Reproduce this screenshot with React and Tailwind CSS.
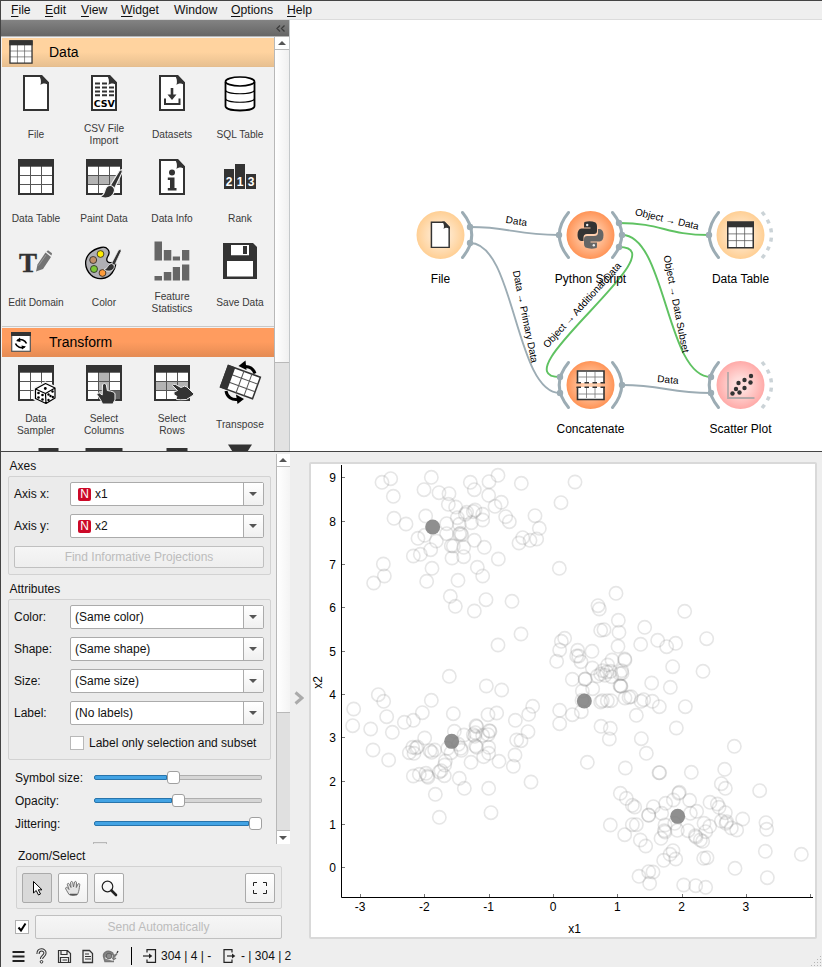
import React from "react";

const INK = "#333333";

/* ---------- toolbox icons, all on a 40x40 grid ---------- */

function Icon({ children }) {
  return (
    <svg viewBox="0 0 40 40" className="w-10 h-10 block overflow-visible">
      {children}
    </svg>
  );
}

function Sheet() {
  return (
    <>
      <path d="M8 3H25L32 10V37H8Z" fill="#fff" stroke={INK} strokeWidth="2" />
      <path d="M22.500 2H26L33 9.500V12C29 10 26.500 10 24.500 12C25.500 8 25 5 22.500 2Z" fill={INK} />
    </>
  );
}

function Table({ row, col, dark }) {
  return (
    <>
      <rect x="3" y="3" width="34" height="34" fill="#fff" />
      {row && <rect x="4" y="18.500" width="32" height="9" fill="#b3b3b3" />}
      {col && <rect x="14.500" y="9" width="11" height="27" fill="#b3b3b3" />}
      {dark && <rect x="26" y="27.500" width="11" height="9.500" fill="#666" />}
      <path d="M14.500 9V37M25.500 9V37M3 18.500H37M3 27.500H37" stroke="#555" strokeWidth="1" />
      <path d="M3 3H37V37H3Z" fill="none" stroke={INK} strokeWidth="2" />
      <rect x="2" y="2" width="36" height="7.700" fill={INK} />
    </>
  );
}

function Brush() {
  return (
    <g stroke="#f1f1f1" strokeWidth="1.200" fill={INK}>
      <path d="M35.500 13.500L38 12.500L38.300 15L30.500 31.500L26 29Z" />
      <path d="M26 28.500C28.500 28.500 31 31 30.500 34C29.500 38 26 41 21.500 41C19 41 17 40.500 16 39C20 38.500 20 36 21.500 32C22.500 29.500 24 28.500 26 28.500Z" />
    </g>
  );
}

const icons = {
  file: <Sheet />,
  csv: (
    <>
      <Sheet />
      <path d="M11 10.500H23M11 14.500H30M11 18.500H30M11 22.300H30" stroke={INK} strokeWidth="2" strokeDasharray="5 2" />
      <text x="20.300" y="34" textAnchor="middle" fontSize="9.500" fontWeight="bold" fontFamily="DejaVu Sans, sans-serif" fill="#000">CSV</text>
    </>
  ),
  datasets: (
    <>
      <Sheet />
      <path d="M18.700 15H21.300V21.500H24.500L20 27L15.500 21.500H18.700Z" fill={INK} />
      <path d="M13 25.500V31H27.500V25.500" fill="none" stroke={INK} strokeWidth="2" />
    </>
  ),
  sql: (
    <>
      <path d="M5.500 9V33C5.500 39 34.500 39 34.500 33V9" fill="#fff" stroke="#000" strokeWidth="1.800" />
      <ellipse cx="20" cy="8.500" rx="14.500" ry="4.500" fill="#fff" stroke="#000" strokeWidth="1.700" />
      <path d="M5.500 17C6 22 34 22 34.500 17M5.500 25.500C6 30.500 34 30.500 34.500 25.500" fill="none" stroke="#000" strokeWidth="1.200" />
    </>
  ),
  table: <Table />,
  paint: (
    <>
      <Table row />
      <Brush />
    </>
  ),
  info: (
    <>
      <Sheet />
      <circle cx="20" cy="15.500" r="3" fill={INK} />
      <path d="M15.800 20.500H22.500V31H24.500V33.500H15.800V31H18V23H15.800Z" fill={INK} />
    </>
  ),
  rank: (
    <>
      <path d="M4 12H14V32H4ZM15 7H25V32H15ZM26 17H36V32H26Z" fill={INK} />
      <g fill="#fff" fontSize="12" fontWeight="bold" fontFamily="Liberation Sans, sans-serif" textAnchor="middle">
        <text x="9" y="29">2</text>
        <text x="20" y="29">1</text>
        <text x="31" y="29">3</text>
      </g>
    </>
  ),
  domain: (
    <>
      <text x="12" y="31" textAnchor="middle" fontSize="27" fontWeight="bold" fontFamily="Liberation Serif, serif" fill={INK} stroke={INK} strokeWidth=".4">T</text>
      <g fill="#737373">
        <path d="M20 30.500L21.500 23.500L29.500 11.500L35 16L27 28Z" />
        <path d="M30.500 10.700L32 9.300L36 12.300L35.500 14.500Z" />
      </g>
      <path d="M22.500 24.500L30 14" stroke="#999" strokeWidth="1" />
    </>
  ),
  color: (
    <>
      <path d="M17 6.500C23 5 27 10 24 15C21 20 24 23 29 21C33 20 32 27 28 32C23 38.500 13 39.500 7 34C0 27 0 18 6 12C9 9 13 7.500 17 6.500Z" fill="#b0b0b4" stroke="#000" strokeWidth="1.300" />
      <g stroke="#222" strokeWidth="0.800">
        <circle cx="16.500" cy="13" r="3.400" fill="#ffec00" />
        <circle cx="9.200" cy="19" r="3.500" fill="#c0906a" />
        <circle cx="10" cy="28" r="3.500" fill="#7ec838" />
        <circle cx="18.500" cy="32" r="3.400" fill="#ff9c3a" />
      </g>
      <g stroke="#f1f1f1" strokeWidth="0.800" fill={INK}>
        <path d="M34.500 9L37 8L37 10.500L30.500 24.500L27.500 22.500Z" />
        <path d="M27.300 22.500C29.500 23 31 25 29.800 27.500C28 30.500 23 31 20 28.500C23.500 28.500 23.500 23 27.300 22.500Z" />
      </g>
    </>
  ),
  stats: (
    <path
      d="M2.500 .5H10V19.500H2.500ZM11.800 9H19.300V19.500H11.800ZM20.800 15.500H28V19.500H20.800ZM30 9H37.300V19.500H30ZM2.500 35H10V39.500H2.500ZM11.800 31H19.300V39.500H11.800ZM20.800 26H28V39.500H20.800ZM30 23.500H37.300V39.500H30Z"
      fill="#666"
    />
  ),
  save: (
    <>
      <path d="M3 2H33L37 6V38H3Z" fill={INK} />
      <path d="M11 4H29V14.200H11ZM7 20H33V35.500H7Z" fill="#fff" />
      <rect x="23" y="5" width="4" height="8" fill={INK} />
    </>
  ),
  sampler: (
    <>
      <Table />
      <path d="M29.500 20L39.500 24.500V35.500L30 41.500L19 36V25.500Z" fill="#fff" stroke="#f1f1f1" strokeWidth="3" />
      <path d="M29.500 20.500L39 25V35L30 40.500L19.500 35.500V26Z M19.500 26L29.500 30.500L39 25M29.500 30.500L30 40.500" fill="#fff" stroke="#000" strokeWidth="1.200" strokeLinejoin="round" />
      <g fill="#000">
        <circle cx="29.300" cy="25.500" r="1.400" />
        <circle cx="22.500" cy="30" r="1.300" /><circle cx="26.500" cy="32" r="1.300" />
        <circle cx="22.500" cy="34.500" r="1.300" /><circle cx="26.500" cy="36.500" r="1.300" />
        <circle cx="32.500" cy="31.500" r="1.200" /><circle cx="36.500" cy="28.500" r="1.200" />
        <circle cx="34.500" cy="33" r="1.200" />
        <circle cx="32.500" cy="37" r="1.200" /><circle cx="36.800" cy="34" r="1.200" />
      </g>
    </>
  ),
  columns: (
    <>
      <Table col dark />
      <path d="M18.500 21.500Q20.500 19.500 22.300 21.500L23.300 27.500Q31 28.500 31 31V37Q30 38 29 41H18.500Q17.500 38 16 36L13 31.500Q13.500 29.500 15.500 30L18.200 32Z" fill={INK} stroke="#f1f1f1" strokeWidth="1" />
    </>
  ),
  rows: (
    <>
      <Table row />
      <path d="M20.500 22.500Q21 20.500 23.500 21.500L29 24.500Q33 22 35 24L41.500 30.500V32L34.500 36.500Q28 37 24.500 36.500Q23.500 35 25 33.500L22 31.500V29L25.500 27.500Z" fill={INK} stroke="#f1f1f1" strokeWidth="1" />
    </>
  ),
  transpose: (
    <>
      <g transform="rotate(20 20 19)">
        <rect x="3.500" y="7.500" width="34" height="23" fill="#fff" stroke={INK} strokeWidth="1.500" />
        <path d="M20 7V31M28.500 7V31M10 15H37.500M10 23H37.500" stroke="#555" />
        <rect x="2.700" y="7" width="8" height="24" fill={INK} />
      </g>
      <path d="M35 10.500C33 5 29 3 24 3.500" fill="none" stroke="#000" strokeWidth="3" />
      <path d="M18.500 3L25.500 -2.500L26.500 7Z" />
      <path d="M6 28C7 34 12 37 17 36.500" fill="none" stroke="#000" strokeWidth="3" />
      <path d="M24 36L16 31.500L17.500 41Z" />
    </>
  ),
  merge: (
    <>
      <path d="M24 8V2.500H41V8" fill="#fff" stroke={INK} strokeWidth="3" />
      <path d="M32.500 4V8" stroke="#555" />
    </>
  ),
  concat: (
    <>
      <path d="M3 8V2.500H37V8" fill="#fff" stroke={INK} strokeWidth="3" />
      <path d="M14.500 4V8M25.500 4V8" stroke="#555" />
    </>
  ),
  aggregate: (
    <>
      <path d="M16 8V2.500H34V8" fill="#fff" stroke={INK} strokeWidth="3" />
      <path d="M25 4V8" stroke="#555" />
    </>
  ),
  funnel: <path d="M8 -2.500H32L24 10H16Z" fill={INK} />,
};

const dataWidgets = [
  ["file", "File"], ["csv", "CSV File\nImport"], ["datasets", "Datasets"], ["sql", "SQL Table"],
  ["table", "Data Table"], ["paint", "Paint Data"], ["info", "Data Info"], ["rank", "Rank"],
  ["domain", "Edit Domain"], ["color", "Color"], ["stats", "Feature\nStatistics"], ["save", "Save Data"],
];

const transformWidgets = [
  ["sampler", "Data\nSampler"], ["columns", "Select\nColumns"], ["rows", "Select\nRows"], ["transpose", "Transpose"],
  ["merge", ""], ["concat", ""], ["aggregate", ""], ["funnel", ""],
];

function WidgetGrid({ items }) {
  return (
    <div className="grid grid-cols-[repeat(4,68px)] auto-rows-[84px]">
      {items.map(([icon, label]) => (
        <div key={icon} className="flex flex-col items-center pt-1.5">
          <Icon>{icons[icon]}</Icon>
          <div className="mt-2 flex h-7 items-center whitespace-pre text-center text-[10.200px] leading-3 text-[#3a3a3a]">
            {label}
          </div>
        </div>
      ))}
    </div>
  );
}

function Category({ title, color, children }) {
  return (
    <div className={"flex h-[29px] w-[272px] shrink-0 items-center border-b border-black/10 " + color}>
      <div className="flex w-[47px] justify-center pr-[9px]">{children}</div>
      <div className="text-[14px] text-black">{title}</div>
    </div>
  );
}

/* ---------- menu and toolbox ---------- */

const menus = [
  ["F", "ile", "w-[34px]"], ["E", "dit", "w-9"], ["V", "iew", "w-10"], ["W", "idget", "w-[53px]"],
  ["", "Window", "w-[57px]"], ["O", "ptions", "w-14"], ["H", "elp", "w-10"],
];

function MenuBar() {
  return (
    <div className="flex h-5 w-full items-center border-b border-[#dcdcdc] border-t border-t-[#444] bg-[#efefef] pl-2.5 text-[12.200px]">
      {menus.map(([key, rest, w]) => (
        <div key={rest} className={w}>
          <span className="underline underline-offset-2">{key}</span>
          {rest}
        </div>
      ))}
    </div>
  );
}

function Arrow({ down }) {
  return (
    <svg viewBox="0 0 8 4" className="h-1 w-2">
      <path d={down ? "M0 0H8L4 4Z" : "M0 4H8L4 0Z"} fill="#555" />
    </svg>
  );
}

function Toolbox() {
  return (
    <div className="flex w-[289px] shrink-0 flex-col border-r border-[#c4c8ca]">
      <div className="flex h-4 items-center justify-end bg-linear-to-b from-[#838383] to-[#666] pr-1">
        <svg viewBox="0 0 9 7" className="h-[7px] w-[9px]">
          <path d="M4 .5L1 3.500L4 6.500M8.500 .5L5.500 3.500L8.500 6.500" fill="none" stroke="#3c3c3c" strokeWidth="1.300" />
        </svg>
      </div>
      <div className="flex min-h-0 flex-1 border-t border-[#b5b5b5]">
        <div className="flex w-[273px] flex-col overflow-hidden bg-[#f1f1f1] pl-px pt-px">
          <Category title="Data" color="bg-linear-to-b from-[#ffd39f] from-50% to-[#e8c090]">
            <svg viewBox="1.500 1.500 37 37" className="size-6">
              <Table />
            </svg>
          </Category>
          <div className="h-[260px] shrink-0 border-b border-[#c8c8c8]">
            <WidgetGrid items={dataWidgets} />
          </div>
          <div className="flex pt-px">
            <Category title="Transform" color="bg-linear-to-b from-[#ff9c5f] from-50% to-[#e68c54]">
              <svg viewBox="0 0 20 20" className="size-5">
                <rect x=".7" y=".7" width="18.600" height="18.600" fill="#fff" stroke="#555" strokeWidth="1.200" />
                <rect width="20" height="4" fill={INK} />
                <path d="M6.500 8.300C10 6.500 14 8 15.500 11.500M13.500 15C10 16.500 6 15.500 4.500 11.500" fill="none" stroke="#000" strokeWidth="1.600" />
                <path d="M5 9L9 5.500L9.500 10ZM15 14.500L10.500 13.500L11 17.500Z" />
              </svg>
            </Category>
          </div>
          <WidgetGrid items={transformWidgets} />
        </div>
        <div className="flex w-[15px] flex-col border-l border-[#b8b8b8] bg-[#e2e2e2]">
          <div className="flex h-[13px] items-center justify-center border-b border-[#b8b8b8] bg-white pr-px"><Arrow /></div>
          <div className="h-[313px] border-b border-[#b8b8b8] bg-linear-to-r from-white to-[#f0f0f0]" />
        </div>
      </div>
    </div>
  );
}

/* ---------- workflow canvas ---------- */

const GRAY = "#9cacb4";
const GREEN = "#5fc262";

function Node({ x, y, fill, label, left, right, idle, children }) {
  return (
    <g transform={`translate(${x} ${y})`}>
      <circle r="24" fill={`url(#${fill})`} />
      {left && <path d="M-22 -22.500Q-40.500 0 -22 22.500" fill="none" stroke={GRAY} strokeWidth="3" strokeLinecap="round" />}
      {right && <path d="M22 -22.500Q40.500 0 22 22.500" fill="none" stroke={GRAY} strokeWidth="3" strokeLinecap="round" />}
      {idle && <path d="M21.500 -23Q40.500 0 21.500 23" fill="none" stroke="#cbd3d7" strokeWidth="3.500" pathLength="50" strokeDasharray="4 5.200" />}
      {children}
      <text y="48" textAnchor="middle" fontSize="12" fill="#000">{label}</text>
    </g>
  );
}

const links = [
  ["M470 227C512 227 514 235 559 235", GRAY],
  ["M470 243C515 243 515 393 560 393", GRAY],
  ["M622 385C664 385 668 393 711 393", GRAY],
  ["M619 223C662 223 666 235 709 235", GREEN],
  ["M622 235C666 235 666 377 711 377", GREEN],
  ["M619 247C682 247 497 377 560 377", GREEN],
];

const ports = [
  [470, 227], [470, 243], [559, 235], [619, 223], [622, 235], [619, 247], [709, 235],
  [560, 377], [560, 393], [622, 385], [711, 377], [711, 393],
];

const linkLabels = [
  [516.5, 221, 9, "Data", 21.5],
  [525.5, 316.5, 78.5, "Data → Primary Data", 94],
  [582, 305, -48, "Object → Additional Data", 111],
  [667, 219, 13, "Object → Data", 65],
  [676.5, 304, 79, "Object → Data Subset", 99],
  [668, 379.5, 5, "Data", 21.5],
];

function Canvas() {
  return (
    <svg viewBox="290 20 532 431" className="block h-[431px] w-[532px] bg-white" fontFamily="Liberation Sans, sans-serif">
      <defs>
        <radialGradient id="cream"><stop offset=".3" stopColor="#ffe9cf" /><stop offset="1" stopColor="#ffcf94" /></radialGradient>
        <radialGradient id="orange"><stop offset=".25" stopColor="#ffd0b0" /><stop offset="1" stopColor="#ff9457" /></radialGradient>
        <radialGradient id="pink"><stop offset=".3" stopColor="#ffdcda" /><stop offset="1" stopColor="#ffaaa8" /></radialGradient>
      </defs>
      {links.map(([d, c]) => <path key={d} d={d} fill="none" stroke={c} strokeWidth="1.900" />)}
      <Node x={440.5} y={235} fill="cream" label="File" right>
        <g transform="translate(-15 -15) scale(.74)"><Sheet /></g>
      </Node>
      <Node x={590.5} y={235} fill="orange" label="Python Script" left right>
        <path d="M-6 -13Q0 -14.500 5 -12.500Q6.500 -11.500 6.500 -9V-4Q6.500 -1 3.500 -1H-3.500Q-7 -1 -7 2.500V6H-9.500Q-13 5 -13 0Q-13 -6 -9 -6.500H0V-7.500H-6.500V-10.500Q-6.500 -12.500 -6 -13Z" fill={INK} />
        <path d="M6 13Q0 14.500 -5 12.500Q-6.500 11.500 -6.500 9V4Q-6.500 1 -3.500 1H3.500Q7.500 1 7.500 -2.500V-6H9.500Q13 -5 13 0Q13 6 9 6.500H0V7.500H6.500V10.500Q6.500 12.500 6 13Z" fill="#666" />
        <circle cx="-3.300" cy="-10" r="1.200" fill="#eee" />
        <circle cx="3.300" cy="10.200" r="1.200" fill="#eee" />
      </Node>
      <Node x={740.5} y={235} fill="cream" label="Data Table" left idle>
        <g transform="translate(-15 -15) scale(.75)"><Table /></g>
      </Node>
      <Node x={590.5} y={385} fill="orange" label="Concatenate" left right>
        <path d="M-13 -14.500H13.500V-2H-13ZM-13 2H13.500V14.500H-13Z" fill="#fff" />
        <path d="M-4 -13V-3M4.500 -13V-3M-12 -8H13M-4 3V13M4.500 3V13M-12 9H13" stroke="#777" strokeWidth=".8" />
        <path d="M-13 -2V-14H13.500V-2M-13 2V14.500H13.500V2" fill="none" stroke={INK} strokeWidth="1.600" />
        <path d="M-14 -2.200H14.500M-14 2.200H14.500" stroke={INK} strokeWidth="1.600" strokeDasharray="4.500 3.500" />
      </Node>
      <Node x={740.5} y={385} fill="pink" label="Scatter Plot" left idle>
        <path d="M-12.500 -13V13H14" fill="none" stroke="#b5a8a8" strokeWidth="1.800" />
        {[[-8, 8.5], [-4.5, 4], [-1, 7.5], [-2, -2], [4, 3], [4, -5], [10, -2.5], [10.5, -9]].map(([a, b]) => (
          <circle key={a + "," + b} cx={a} cy={b} r="2.200" fill={INK} />
        ))}
      </Node>
      {ports.map(([x, y]) => <circle key={x + "," + y} cx={x} cy={y} r="3.200" fill={GRAY} />)}
      {linkLabels.map(([x, y, a, t, len]) => (
        <text key={t + x} transform={`translate(${x} ${y}) rotate(${a})`} y="3.500" textAnchor="middle" fontSize="10" textLength={len} fill="#000">
          {t}
        </text>
      ))}
    </svg>
  );
}

/* ---------- scatter plot ---------- */

// Each cluster lists x,y pairs in thirds of a pixel from its own origin.
const clusters = [
  {
    at: [340, 460],
    picked: [278, 201],
    pts: "126,67 152,56 274,52 160,109 252,89 297,98 327,101 391,67 403,89 447,65 474,46 446,106 544,70 325,133 347,141 465,139 484,127 162,175 198,192 257,168 320,191 352,173 358,193 380,157 376,163 400,155 405,150 428,163 428,180 394,188 497,170 508,185 585,167 598,205 234,235 254,226 289,243 320,221 358,222 362,220 365,224 548,233 537,249 570,241 590,237 403,241 433,262 272,269 334,257 340,258 371,262 336,294 371,290 475,297 220,288 241,283 130,312 133,348 101,369 276,325 260,364 354,361 412,322 428,348 331,409 346,439 403,453 438,419 516,424 543,522 663,128 658,325 705,66",
  },
  {
    at: [340, 640],
    picked: [335, 304],
    pts: "474,15 328,109 439,138 485,150 115,164 131,184 274,181 41,207 38,257 140,230 92,267 157,277 193,247 220,241 247,218 340,221 444,224 470,219 526,241 566,223 578,199 564,275 530,300 543,302 343,274 372,285 408,257 410,260 406,278 400,284 404,289 448,272 450,274 444,284 428,286 99,330 146,360 254,294 232,321 228,324 218,322 208,338 222,340 270,332 275,337 284,330 323,325 362,325 364,331 355,313 333,338 410,322 407,318 446,322 446,340 431,350 393,367 477,364 520,379 525,345 316,363 314,375 298,396 303,392 313,407 220,408 238,403 258,400 262,408 264,412 358,415 373,445 573,426 446,445 286,463 298,532 453,518",
  },
  {
    at: [540, 570],
    picked: [133, 393],
    pts: "228,70 174,107 178,117 434,124 235,151 237,187 182,181 192,179 314,172 302,223 353,211 380,230 407,220 500,206 74,205 64,214 59,240 50,274 234,229 156,244 113,241 110,258 116,258 123,275 398,290 489,304 157,294 216,270 254,267 255,270 203,285 188,302 200,306 212,304 182,312 195,316 172,318 215,320 245,302 246,310 240,311 97,328 136,327 135,328 335,339 391,352 127,363 158,356 240,347 243,349 242,348 126,391 182,396 187,392 202,392 213,392 255,384 267,382 273,380 303,394 311,389 337,394 358,410 436,410 59,421 59,461 97,434 124,425",
  },
  {
    at: [590, 710],
    picked: [263, 319],
    pts: "139,16 33,49 61,55 58,87 154,86 259,54 169,130 433,109 404,178 304,187 207,188 209,188 -8,157 106,174 91,250 109,265 127,286 134,291 394,221 406,235 509,242 268,247 266,250 250,270 227,280 190,290 299,271 360,277 382,282 387,292 406,308 176,316 176,315 215,310 301,310 320,304 458,327 61,345 127,344 139,344 104,374 225,345 223,362 225,366 213,385 262,361 254,340 342,340 359,349 347,365 294,362 316,377 318,381 331,390 338,394 394,333 408,340 410,335 424,354 440,360 528,338 530,358 526,424 634,433 151,390 167,408 249,422 240,433 221,451 257,447 341,445 351,443 435,475 532,503 147,499 176,485 189,486 179,520 281,525 317,527 347,532",
  },
];

const xTicks = [-3, -2, -1, 0, 1, 2, 3, 4];
const yTicks = [0, 1, 2, 3, 4, 5, 6, 7, 8, 9];

function Plot() {
  return (
    <svg viewBox="311 464 504 473" className="block h-[473px] w-[504px]" fontFamily="Liberation Sans, sans-serif" fontSize="12" fill="#000">
      {clusters.map(({ at, pts, picked }) => (
        <g key={at.join()} transform={`translate(${at[0]} ${at[1]}) scale(.33333)`}>
          <g fill="none" stroke="#808080" strokeOpacity=".2" strokeWidth="4.800">
            {pts.split(" ").map((p, i) => {
              const [cx, cy] = p.split(",");
              return <circle key={i} cx={cx} cy={cy} r="20" />;
            })}
          </g>
          <circle cx={picked[0]} cy={picked[1]} r="22.500" fill="#808080" fillOpacity=".88" />
        </g>
      ))}
      <path d="M341.500 465V897.500H813" fill="none" stroke="#000" strokeWidth="1" />
      {yTicks.map((v) => {
        const y = Math.round(867.3 - v * 43.35);
        return (
          <g key={v}>
            <path d={`M342 ${y + 0.5}h3`} stroke="#777" />
            <text x="336" y={y + 4.5} textAnchor="end">{v}</text>
          </g>
        );
      })}
      {xTicks.map((v) => {
        const x = 553 + v * 64.3;
        return (
          <g key={v}>
            <path d={`M${Math.round(x) + 0.5} 894v3`} stroke="#777" />
            {v < 4 && <text x={x} y="911" textAnchor="middle">{v}</text>}
          </g>
        );
      })}
      <text x="574.500" y="933" textAnchor="middle">x1</text>
      <text transform="translate(321.500 682.500) rotate(-90)" textAnchor="middle">x2</text>
    </svg>
  );
}

/* ---------- control panel ---------- */

function Combo({ label, value, numeric }) {
  return (
    <div className="flex h-6 items-center">
      <div className="w-14">{label}</div>
      <div className="flex h-6 flex-1 rounded-[2px] border border-[#ababab] bg-white">
        <div className="flex flex-1 items-center pl-1">
          {numeric && (
            <span className="ml-[3px] mr-1 flex h-[13px] w-[13px] items-center justify-center rounded-[2px] bg-[#cc0928] text-[12px] leading-none text-white">N</span>
          )}
          {value}
        </div>
        <div className="flex w-5 items-center justify-center border-l border-[#ababab] bg-linear-to-b from-white to-[#f0f0f0] pr-0.5">
          <Arrow down />
        </div>
      </div>
    </div>
  );
}

const boxCls = "rounded-[2px] border border-[#d2d2d2] bg-[#ebebeb]";

function Slider({ label, value }) {
  return (
    <div className="flex h-[23px] items-center">
      <div className="w-[79px]">{label}</div>
      <div className="flex w-[168px] items-center">
        <div className="h-[5px] rounded-l-[2px] border border-[#2874ab] bg-[#42a3e4]" style={{ width: value }} />
        <div className="h-[13px] w-[13px] shrink-0 rounded-[3px] border border-[#a0a0a0] bg-white" />
        {value < 155 && <div className="h-[5px] flex-1 rounded-r-[2px] border border-l-0 border-[#aeaeae] bg-[#d6d6d6]" />}
      </div>
    </div>
  );
}

function ToolButton({ active, children }) {
  return (
    <div className={"flex size-[30px] items-center justify-center rounded-[2px] border border-[#aaa] " + (active ? "bg-[#d9d9d9]" : "bg-linear-to-b from-white to-[#f1f1f1]")}>
      <svg viewBox="0 0 20 20" className="size-5">{children}</svg>
    </div>
  );
}

function Controls() {
  return (
    <div className="flex w-[289px] shrink-0 flex-col text-[12px]">
      <div className="flex h-[392px] overflow-hidden">
        <div className="w-[275px] shrink-0 pl-[7px] pr-1">
          <div className="mt-[7px] h-[17px] pl-[1.500px] leading-[15px]">Axes</div>
          <div className={boxCls + " flex h-[99px] w-[263px] flex-col gap-2 pl-[5px] pr-1.5 pt-[5px]"}>
            <Combo label="Axis x:" value="x1" numeric />
            <Combo label="Axis y:" value="x2" numeric />
            <div className="flex h-[22px] items-center justify-center rounded-[2px] border border-[#c0c0c0] bg-linear-to-b from-[#f6f6f6] to-[#eeeeee] text-[#bcbcbc]">
              Find Informative Projections
            </div>
          </div>
          <div className="mt-[7px] h-[17px] pl-[1.500px] leading-[15px]">Attributes</div>
          <div className={boxCls + " flex h-[161px] w-[263px] flex-col gap-2 pl-[5px] pr-1.5 pt-[5px]"}>
            <Combo label="Color:" value="(Same color)" />
            <Combo label="Shape:" value="(Same shape)" />
            <Combo label="Size:" value="(Same size)" />
            <Combo label="Label:" value="(No labels)" />
            <div className="mt-[3px] flex items-center gap-[5px] pl-14 leading-[14px]">
              <span className="size-3.5 border border-[#b8b8b8] bg-white" />
              Label only selection and subset
            </div>
          </div>
          <div className="pl-[7px] pt-1.5">
            <Slider label="Symbol size:" value={73} />
            <Slider label="Opacity:" value={78} />
            <Slider label="Jittering:" value={155} />
            <div className="ml-[78px] mt-[7px] size-3.5 border border-[#b8b8b8] bg-[#e4e4e4]" />
          </div>
        </div>
        <div className="mt-0.5 flex h-[390px] w-[14px] flex-col border-l border-[#b8b8b8] bg-[#e0e0e0]">
          <div className="flex h-[13px] items-center justify-center border-b border-[#b8b8b8] bg-white pr-px"><Arrow /></div>
          <div className="h-[246px] border-b border-[#b8b8b8] bg-linear-to-r from-white to-[#f4f4f4]" />
          <div className="flex-1" />
          <div className="flex h-[14px] items-center justify-center border-t border-[#b8b8b8] bg-white pr-px"><Arrow down /></div>
        </div>
      </div>
      <div className="mt-[4px] h-[18px] pl-[17px] leading-4">Zoom/Select</div>
      <div className={boxCls + " ml-[15px] flex h-[43px] w-[266px] items-center gap-1.5 pl-[5px] pr-1.5"}>
        <ToolButton active>
          <path d="M6.500 3.500V15L9.200 12.500L11.500 17L13.500 16L11.300 11.800H15Z" fill="#fff" stroke="#000" />
        </ToolButton>
        <ToolButton>
          <path d="M6 16.500C4 13 2.500 11 2.500 10C3.500 8.500 5 10 6 11.500L4.300 6.500C4.500 5 5.800 5 6.300 6.300L8 9.500L7.500 4.500C8 3 9.500 3.300 9.700 4.500L10.500 9L11.500 4C12.300 2.800 13.500 3.500 13.500 4.800L13.300 9.500L15 6C16 5 17 5.800 16.700 7.300C16 11 16.500 12 14.500 16.500Q10 18.500 6 16.500Z" fill="#e4e4e4" stroke="#666" strokeWidth=".9" />
          <path d="M7 16.500H14" stroke="#555" strokeWidth="1.500" />
        </ToolButton>
        <ToolButton>
          <circle cx="8.500" cy="8.500" r="5.300" fill="#f6f6f6" stroke="#222" strokeWidth="1.200" />
          <path d="M12.500 12.500L17 17" stroke="#222" strokeWidth="2.600" strokeLinecap="round" />
        </ToolButton>
        <div className="ml-auto">
          <ToolButton>
            <path d="M3.500 8V4.500H7M13 4.500H16.500V8M16.500 12V15.500H13M7 15.500H3.500V12" fill="none" stroke="#222" strokeWidth="1" />
          </ToolButton>
        </div>
      </div>
      <div className="mt-1.5 flex items-center pl-[14px]">
        <span className="flex size-3.5 items-center justify-center border border-[#b0b0b0] bg-white">
          <svg viewBox="0 0 10 10" className="size-2.5">
            <path d="M1.500 5.500L4 8.500L8.500 1.500" fill="none" stroke="#000" strokeWidth="2" />
          </svg>
        </span>
        <div className="ml-1.5 flex h-6 w-[247px] items-center justify-center rounded-[2px] border border-[#c0c0c0] bg-linear-to-b from-[#f6f6f6] to-[#eee] text-[#bcbcbc]">
          Send Automatically
        </div>
      </div>
    </div>
  );
}

function StatusBar() {
  return (
    <div className="flex h-[27px] items-center pl-2.5 pt-[5px] text-[12px]">
      <svg viewBox="0 0 120 20" className="h-5 w-[120px]" fill="none" stroke="#333">
        <path d="M1.500 6H13.500M1.500 10.500H13.500M1.500 15H13.500" strokeWidth="2" stroke="#222" />
        <path d="M27 8C27 2.500 34 3 34 7C34 10 30.500 10 30.500 13" strokeWidth="3.200" />
        <path d="M27 8C27 2.500 34 3 34 7C34 10 30.500 10 30.500 13" strokeWidth="1.200" stroke="#eee" />
        <circle cx="30.500" cy="15.800" r="1.300" />
        <path d="M47.500 4.500H56.500L59.500 7.500V16.500H47.500ZM50 4.500V8.500H56V4.500M49.500 16.500V11.500H57.500V16.500" strokeWidth="1.200" />
        <path d="M51.500 14H56" />
        <path d="M72 4.500H78.500L81.500 7.500V16.500H72Z" strokeWidth="1.300" />
        <path d="M74 8H78M74 10.500H80M74 13H80" />
        <path d="M93 12C91 7 96 4 100 6C103 7 103 11 101.500 13L106 7.500M102 14L105 12M93 12L94 15.500H103" fill="#888" stroke="#777" strokeWidth="1.500" />
        <circle cx="98" cy="10" r="2.800" stroke="#555" fill="#8c8c8c" strokeWidth=".8" />
        <path d="M106 7L107 5" strokeWidth="1.200" />
      </svg>
      <div className="h-[18px] w-px bg-black" />
      <svg viewBox="0 0 14 14" className="ml-[11px] h-[14px] w-[14px]" fill="none" stroke="#222" strokeWidth="1.200">
        <path d="M4 3.500V.7H12.500V13.300H4V10.500" />
        <path d="M0 7H7" />
        <path d="M6 4.500L9.300 7L6 9.500Z" fill="#222" stroke="none" />
      </svg>
      <div className="ml-1 w-[62px] whitespace-nowrap">304 | 4 | -</div>
      <svg viewBox="0 0 14 14" className="h-[14px] w-[14px]" fill="none" stroke="#222" strokeWidth="1.200">
        <path d="M9 3.500V.7H1V13.300H9V10.500" />
        <path d="M4 7H10" />
        <path d="M9 4.500L12.300 7L9 9.500Z" fill="#222" stroke="none" />
      </svg>
      <div className="ml-1 whitespace-nowrap">- | 304 | 2</div>
      <svg viewBox="0 0 12 12" className="ml-auto mt-auto size-3" fill="#b5b5b5">
        {[[9, 1], [6, 4], [9, 4], [3, 7], [6, 7], [9, 7], [0, 10], [3, 10], [6, 10], [9, 10]].map(([a, b]) => (
          <rect key={a + "," + b} x={a + 1} y={b} width="1" height="1" />
        ))}
      </svg>
    </div>
  );
}

export default function App() {
  return (
    <div className="flex h-[967px] w-[822px] flex-col overflow-hidden bg-[#eeeeee] font-['Liberation_Sans',Arial,sans-serif] text-[#111]">
      <div className="flex h-[451px] shrink-0 flex-col border-l border-[#444]">
        <MenuBar />
        <div className="flex h-[431px]">
          <Toolbox />
          <Canvas />
        </div>
      </div>
      <div className="flex min-h-0 flex-1 flex-col border-l border-t border-[#444]">
        <div className="flex h-[488px] shrink-0">
          <Controls />
          <div className="flex w-[19px] shrink-0 justify-center pr-0.5 pt-[239px]">
            <svg viewBox="0 0 10 14" className="h-[14px] w-[10px]">
              <path d="M1.500 1.500L8 7L1.500 12.500" fill="none" stroke="#aaa" strokeWidth="3" />
            </svg>
          </div>
          <div className="mt-[10px] h-[477px] w-[508px] shrink-0 rounded-[2px] border-2 border-[#d9d9d9] bg-white">
            <Plot />
          </div>
        </div>
        <StatusBar />
      </div>
    </div>
  );
}
